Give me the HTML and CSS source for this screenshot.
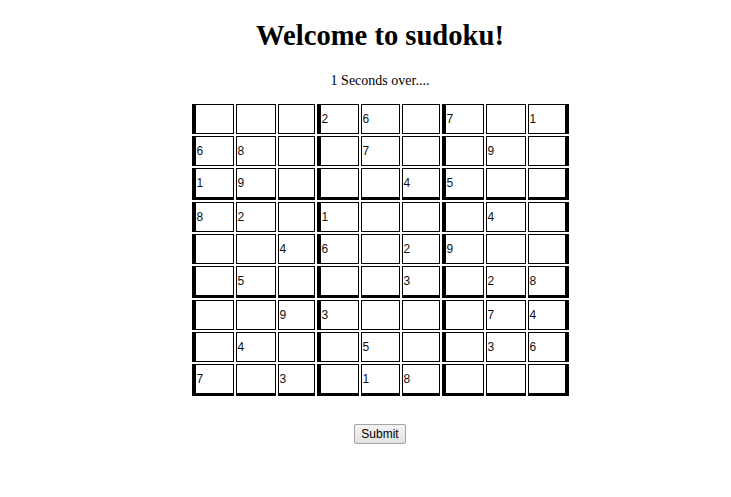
FILE: index.html
```html
<!DOCTYPE html>
<html>
<head>
<meta charset="utf-8">
<title>Sudoku</title>
<link rel="stylesheet" href="styles.css">
</head>
<body>
<div class="page">
  <h1 class="title">Welcome to sudoku!</h1>
  <p class="timer">1 Seconds over....</p>
  <div class="board">
    <div class="cell tl"></div><div class="cell"></div><div class="cell"></div><div class="cell tl">2</div><div class="cell">6</div><div class="cell"></div><div class="cell tl">7</div><div class="cell"></div><div class="cell tr">1</div>
    <div class="cell tl">6</div><div class="cell">8</div><div class="cell"></div><div class="cell tl"></div><div class="cell">7</div><div class="cell"></div><div class="cell tl"></div><div class="cell">9</div><div class="cell tr"></div>
    <div class="cell tl tb">1</div><div class="cell tb">9</div><div class="cell tb"></div><div class="cell tl tb"></div><div class="cell tb"></div><div class="cell tb">4</div><div class="cell tl tb">5</div><div class="cell tb"></div><div class="cell tr tb"></div>
    <div class="cell tl">8</div><div class="cell">2</div><div class="cell"></div><div class="cell tl">1</div><div class="cell"></div><div class="cell"></div><div class="cell tl"></div><div class="cell">4</div><div class="cell tr"></div>
    <div class="cell tl"></div><div class="cell"></div><div class="cell">4</div><div class="cell tl">6</div><div class="cell"></div><div class="cell">2</div><div class="cell tl">9</div><div class="cell"></div><div class="cell tr"></div>
    <div class="cell tl tb"></div><div class="cell tb">5</div><div class="cell tb"></div><div class="cell tl tb"></div><div class="cell tb"></div><div class="cell tb">3</div><div class="cell tl tb"></div><div class="cell tb">2</div><div class="cell tr tb">8</div>
    <div class="cell tl"></div><div class="cell"></div><div class="cell">9</div><div class="cell tl">3</div><div class="cell"></div><div class="cell"></div><div class="cell tl"></div><div class="cell">7</div><div class="cell tr">4</div>
    <div class="cell tl"></div><div class="cell">4</div><div class="cell"></div><div class="cell tl"></div><div class="cell">5</div><div class="cell"></div><div class="cell tl"></div><div class="cell">3</div><div class="cell tr">6</div>
    <div class="cell tl tb">7</div><div class="cell tb"></div><div class="cell tb">3</div><div class="cell tl tb"></div><div class="cell tb">1</div><div class="cell tb">8</div><div class="cell tl tb"></div><div class="cell tb"></div><div class="cell tr tb"></div>
  </div>
  <div class="actions">
    <button class="submit" type="button">Submit</button>
  </div>
</div>
</body>
</html>
```

FILE: styles.css
```css
html, body {
  background: #ffffff;
}
body {
  margin: 8px;
  font-family: "Liberation Serif", "Times New Roman", serif;
  font-size: 14px;
  color: #000;
}
.page {
  padding-left: 29px;
  text-align: center;
}
.title {
  font-size: 28.6px;
  font-weight: bold;
  margin: 12px 0 20.5px;
}
.timer {
  margin: 0 0 13px;
}
.board {
  display: grid;
  justify-content: center;
  grid-template-columns: 42px 40px 37px 42px 39px 38px 42px 40px 41px;
  grid-template-rows: 30px 30px 32px 30px 30px 32px 30px 30px 32px;
  gap: 2px;
  padding: 2px;
}
.cell {
  box-sizing: border-box;
  border: 1px solid #000;
  padding-left: 1px;
  display: flex;
  align-items: center;
  justify-content: flex-start;
  font-family: "Liberation Sans", Arial, sans-serif;
  font-size: 12px;
  color: #111;
  background: #fff;
}
.tl { border-left-width: 4px; }
.tr { border-right-width: 4px; }
.tb { border-bottom-width: 3px; }
.actions {
  margin-top: 26px;
}
.submit {
  font-family: "Liberation Sans", Arial, sans-serif;
  font-size: 12px;
  color: #000;
  padding: 2px 6px;
  background: linear-gradient(#f4f4f4, #e2e2e2);
  border: 1px solid #a3a3a3;
  border-radius: 2px;
}
```
